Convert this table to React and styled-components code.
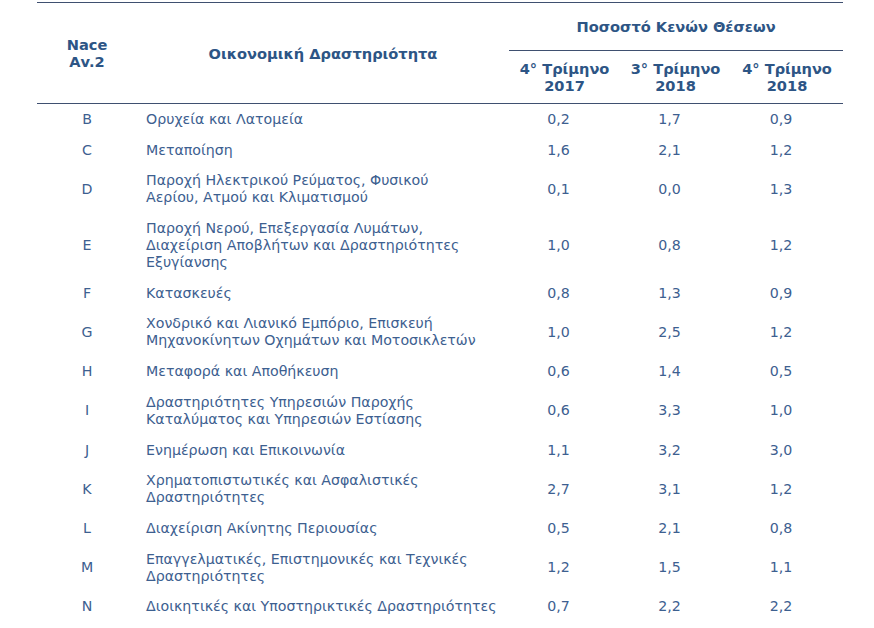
import styled, { createGlobalStyle } from "styled-components";

const GlobalStyle = createGlobalStyle`
  body {
    margin: 0;
    background: #ffffff;
    font-family: "DejaVu Sans", Verdana, sans-serif;
  }
`;

const rows = [
  ["B", ["Ορυχεία και Λατομεία"], "0,2", "1,7", "0,9"],
  ["C", ["Μεταποίηση"], "1,6", "2,1", "1,2"],
  ["D", ["Παροχή Ηλεκτρικού Ρεύματος, Φυσικού", "Αερίου, Ατμού και Κλιματισμού"], "0,1", "0,0", "1,3"],
  ["E", ["Παροχή Νερού, Επεξεργασία Λυμάτων,", "Διαχείριση Αποβλήτων και Δραστηριότητες", "Εξυγίανσης"], "1,0", "0,8", "1,2"],
  ["F", ["Κατασκευές"], "0,8", "1,3", "0,9"],
  ["G", ["Χονδρικό και Λιανικό Εμπόριο, Επισκευή", "Μηχανοκίνητων Οχημάτων και Μοτοσικλετών"], "1,0", "2,5", "1,2"],
  ["H", ["Μεταφορά και Αποθήκευση"], "0,6", "1,4", "0,5"],
  ["I", ["Δραστηριότητες Υπηρεσιών Παροχής", "Καταλύματος και Υπηρεσιών Εστίασης"], "0,6", "3,3", "1,0"],
  ["J", ["Ενημέρωση και Επικοινωνία"], "1,1", "3,2", "3,0"],
  ["K", ["Χρηματοπιστωτικές και Ασφαλιστικές", "Δραστηριότητες"], "2,7", "3,1", "1,2"],
  ["L", ["Διαχείριση Ακίνητης Περιουσίας"], "0,5", "2,1", "0,8"],
  ["M", ["Επαγγελματικές, Επιστημονικές και Τεχνικές", "Δραστηριότητες"], "1,2", "1,5", "1,1"],
  ["N", ["Διοικητικές και Υποστηρικτικές Δραστηριότητες"], "0,7", "2,2", "2,2"],
];

const periods = [
  ["4° Τρίμηνο", "2017"],
  ["3° Τρίμηνο", "2018"],
  ["4° Τρίμηνο", "2018"],
];

const App = () => {
  return (
    <>
      <GlobalStyle />
      <Page>
        <Table>
          <colgroup>
            <col style={{ width: 100 }} />
            <col style={{ width: 372 }} />
            <col style={{ width: 111 }} />
            <col style={{ width: 111 }} />
            <col style={{ width: 112 }} />
          </colgroup>
          <thead>
            <tr>
              <HeadCell rowSpan={2}>
                Nace
                <br />
                Αv.2
              </HeadCell>
              <HeadCell rowSpan={2}>Οικονομική Δραστηριότητα</HeadCell>
              <GroupCell colSpan={3}>Ποσοστό Κενών Θέσεων</GroupCell>
            </tr>
            <tr>
              {periods.map(([q, y], i) => (
                <PeriodCell key={i}>
                  {q}
                  <br />
                  {y}
                </PeriodCell>
              ))}
            </tr>
          </thead>
          <tbody>
            {rows.map(([code, lines, a, b, c]) => (
              <tr key={code}>
                <CodeCell>{code}</CodeCell>
                <NameCell>
                  {lines.map((l, i) => (
                    <div key={i}>{l}</div>
                  ))}
                </NameCell>
                <NumCell>{a}</NumCell>
                <NumCell>{b}</NumCell>
                <NumCell>{c}</NumCell>
              </tr>
            ))}
          </tbody>
        </Table>
      </Page>
    </>
  );
};

export default App;

const Page = styled.div`
  padding: 2px 0 0 37px;
`;

const Table = styled.table`
  width: 806px;
  border-collapse: collapse;
  table-layout: fixed;
  border-top: 1px solid #3f5070;
  font-size: 14.2px;
  line-height: 17px;
  color: #3d6090;

  thead {
    border-bottom: 1px solid #3f5070;
  }
`;

const HeadCell = styled.th`
  height: 100px;
  padding: 0;
  text-align: center;
  vertical-align: middle;
  font-size: 14.6px;
  font-weight: bold;
  color: #2d5585;
`;

const GroupCell = styled.th`
  height: 47px;
  padding: 0;
  text-align: center;
  vertical-align: middle;
  font-size: 14.6px;
  font-weight: bold;
  color: #2d5585;
  border-bottom: 1px solid #3f5070;
`;

const PeriodCell = styled.th`
  height: 51px;
  padding: 0;
  text-align: center;
  vertical-align: middle;
  font-size: 14.6px;
  font-weight: bold;
  color: #2d5585;
`;

const CodeCell = styled.td`
  padding: 7px 0 6.7px;
  text-align: center;
  vertical-align: middle;
`;

const NameCell = styled.td`
  padding: 7px 0 6.7px 9px;
  text-align: left;
  vertical-align: middle;
  white-space: nowrap;
`;

const NumCell = styled.td`
  padding: 7px 12px 6.7px 0;
  text-align: center;
  vertical-align: middle;
`;
